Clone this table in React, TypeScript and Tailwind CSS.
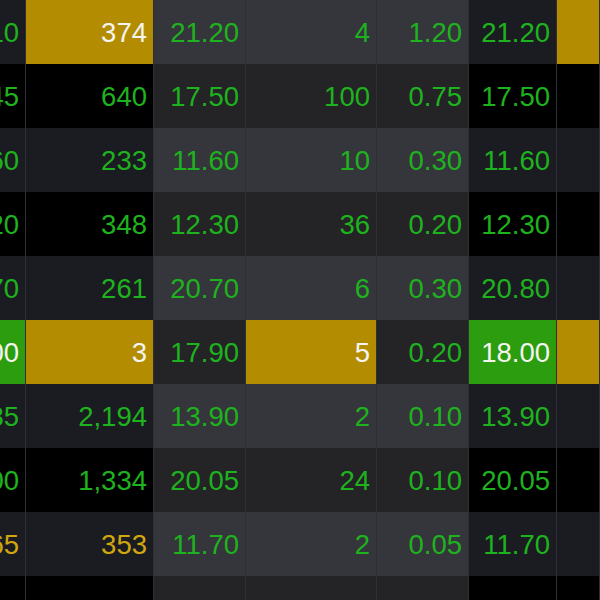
import React from "react";

type HL = "y" | "g" | undefined;
type Row = {
  a: string; b: string; c: string; d: string; e: string; f: string;
  ha?: HL; hb?: HL; hd?: HL; hf?: HL; hg?: HL; txt?: "yellow";
  noText?: boolean;
};

const rows: Row[] = [
  { a: "21.10", b: "374", c: "21.20", d: "4", e: "1.20", f: "21.20", hb: "y", hg: "y" },
  { a: "17.45", b: "640", c: "17.50", d: "100", e: "0.75", f: "17.50" },
  { a: "11.60", b: "233", c: "11.60", d: "10", e: "0.30", f: "11.60" },
  { a: "12.20", b: "348", c: "12.30", d: "36", e: "0.20", f: "12.30" },
  { a: "20.70", b: "261", c: "20.70", d: "6", e: "0.30", f: "20.80" },
  { a: "18.00", b: "3", c: "17.90", d: "5", e: "0.20", f: "18.00", ha: "g", hb: "y", hd: "y", hf: "g", hg: "y" },
  { a: "13.85", b: "2,194", c: "13.90", d: "2", e: "0.10", f: "13.90" },
  { a: "20.00", b: "1,334", c: "20.05", d: "24", e: "0.10", f: "20.05" },
  { a: "11.65", b: "353", c: "11.70", d: "2", e: "0.05", f: "11.70", txt: "yellow" },
  { a: "", b: "", c: "", d: "", e: "", f: "", noText: true },
];

function Cell({
  text, width, hl, odd, gray, yellowText,
}: {
  text: string; width: string; hl: HL; odd: boolean; gray: boolean; yellowText?: boolean;
}) {
  let bg: string;
  if (hl === "y") bg = "bg-[#b38c02]";
  else if (hl === "g") bg = "bg-[#2d9d10]";
  else if (gray) bg = odd ? "bg-[#35363b]" : "bg-[#242426]";
  else bg = odd ? "bg-[#1b1c21]" : "bg-[#000000]";
  const color = hl ? "text-[#f4f4f0]" : yellowText ? "text-[#d1a70f]" : "text-[#1eb31e]";
  return (
    <div
      className={`${width} ${bg} ${color} h-16 shrink-0 overflow-hidden border-r border-[#2f3035] flex justify-end whitespace-nowrap pr-[6px] pt-[1px] leading-[64px]`}
    >
      {text}
    </div>
  );
}

export default function App() {
  return (
    <div
      className="w-[600px] h-[600px] overflow-hidden bg-black text-[27.5px]"
      style={{ fontFamily: '"Liberation Sans", Arial, sans-serif' }}
    >
      {rows.map((r, i) => {
        const odd = i % 2 === 0;
        const yt = r.txt === "yellow";
        return (
          <div key={i} className="flex h-16">
            <Cell text={r.a} width="w-[26px]" hl={r.ha} odd={odd} gray={false} yellowText={yt} />
            <Cell text={r.b} width="w-[128px]" hl={r.hb} odd={odd} gray={false} yellowText={yt} />
            <Cell text={r.c} width="w-[92px]" hl={undefined} odd={odd} gray={true} />
            <Cell text={r.d} width="w-[131px]" hl={r.hd} odd={odd} gray={true} />
            <Cell text={r.e} width="w-[92px]" hl={undefined} odd={odd} gray={true} />
            <Cell text={r.f} width="w-[88px]" hl={r.hf} odd={odd} gray={false} />
            <Cell text="" width="w-[43px]" hl={r.hg} odd={odd} gray={false} />
          </div>
        );
      })}
    </div>
  );
}
